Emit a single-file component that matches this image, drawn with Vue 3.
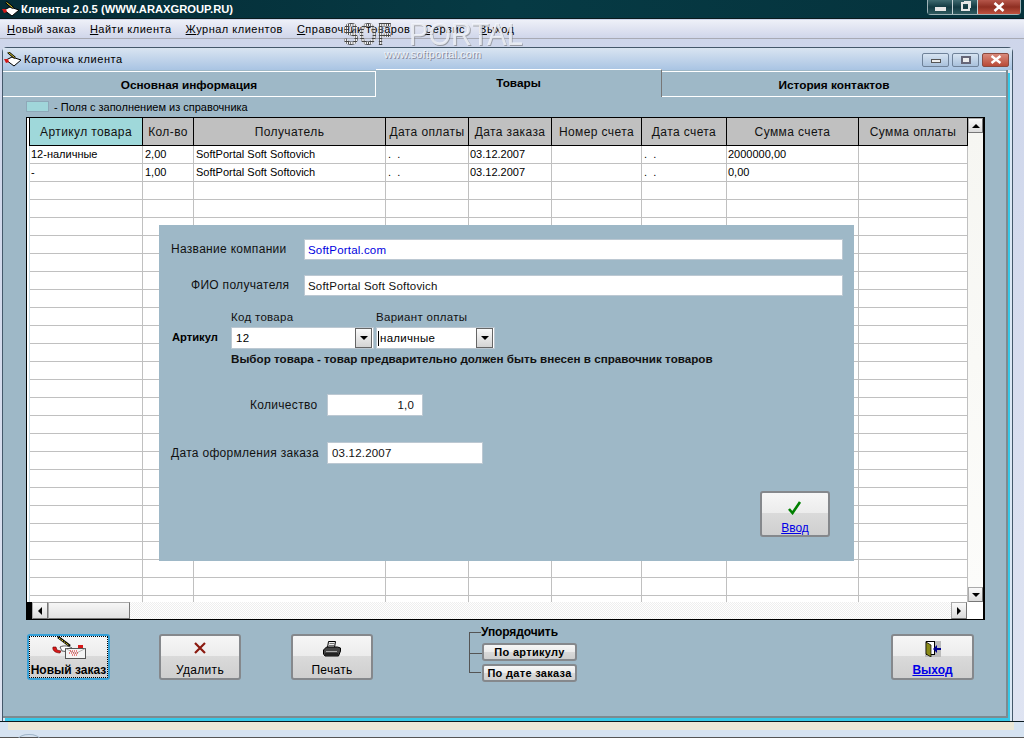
<script setup>
const menu = [
  ['Н', 'овый заказ'], ['Н', 'айти клиента'], ['Ж', 'урнал клиентов'],
  ['С', 'правочник товаров'], ['С', 'ервис'], ['В', 'ыход'],
]
const cols = [
  { t: 'Артикул товара', w: 113 }, { t: 'Кол-во', w: 51 }, { t: 'Получатель', w: 192 },
  { t: 'Дата оплаты', w: 83 }, { t: 'Дата заказа', w: 83 }, { t: 'Номер счета', w: 90 },
  { t: 'Дата счета', w: 85 }, { t: 'Сумма счета', w: 132 }, { t: 'Сумма оплаты', w: 109 },
]
const data = [
  ['12-наличные', '2,00', 'SoftPortal Soft Softovich', '.  .', '03.12.2007', '', '.  .', '2000000,00', ''],
  ['-', '1,00', 'SoftPortal Soft Softovich', '.  .', '03.12.2007', '', '.  .', '0,00', ''],
]
const rows = Array.from({ length: 26 }, (_, i) => data[i] || Array(9).fill(''))
</script>

<template>
  <div class="desk">
    <header class="titlebar">
      <svg class="appicon" width="18" height="16" viewBox="0 0 18 16">
        <path d="M2 9l6-3 9 3-7 6z" fill="#fff" stroke="#000" />
        <path d="M4 1l7 6" stroke="#000" stroke-width="2.4" />
        <path d="M4.5 1.5l6 5" stroke="#ecdc30" />
        <path d="M0 8l4 0 1 3-3 1z" fill="#d01818" />
      </svg>
      <span class="apptitle">Клиенты 2.0.5 (WWW.ARAXGROUP.RU)</span>
      <div class="winbtns">
        <span class="wb dark"><i class="glyph-min"></i></span>
        <span class="wb dark"><i class="glyph-rest"></i></span>
        <span class="wb redb wide">
          <svg width="12" height="10" viewBox="0 0 12 10"><path d="M1.5 1l9 8M10.5 1l-9 8" stroke="#fff" stroke-width="2.6" /></svg>
        </span>
      </div>
    </header>

    <nav class="menubar">
      <span v-for="(m, i) in menu" :key="i" class="menuitem"><u>{{ m[0] }}</u>{{ m[1] }}</span>
    </nav>

    <section class="child">
      <div class="childtitle">
        <svg width="18" height="15" viewBox="0 0 18 15">
          <path d="M2 8l6-3 9 3-7 6z" fill="#fff" stroke="#000" />
          <path d="M4 0l7 6" stroke="#000" stroke-width="2.4" />
          <path d="M4.5 .5l6 5" stroke="#ecdc30" />
          <path d="M0 7l4 0 1 3-3 1z" fill="#d01818" />
        </svg>
        <span class="childname">Карточка клиента</span>
        <div class="childbtns">
          <span class="cb"><i class="cb-min"></i></span>
          <span class="cb"><i class="cb-max"></i></span>
          <span class="cb cbred">
            <svg width="12" height="9" viewBox="0 0 12 9"><path d="M1.5 1l9 7M10.5 1l-9 7" stroke="#fff" stroke-width="2.4" /></svg>
          </span>
        </div>
      </div>

      <div class="panel">
        <div class="tabs">
          <div class="tab t1">Основная информация</div>
          <div class="tab t2">Товары</div>
          <div class="tab t3">История контактов</div>
        </div>
        <div class="legend"><span class="swatch"></span><span>- Поля с заполнением из справочника</span></div>

        <div class="grid">
          <div class="gridmain">
            <div class="thead">
              <div v-for="(c, i) in cols" :key="i" class="th" :class="{ teal: i === 0 }" :style="{ width: c.w + 'px' }">{{ c.t }}</div>
            </div>
            <div class="tbody">
              <div v-for="(r, ri) in rows" :key="ri" class="tr">
                <div v-for="(v, ci) in r" :key="ci" class="td" :style="{ width: cols[ci].w + 'px' }">{{ v }}</div>
              </div>
            </div>
          </div>
          <div class="vscroll">
            <span class="sbtn"><i class="arr up"></i></span>
            <span class="strack"></span>
            <span class="sbtn"><i class="arr down"></i></span>
          </div>
          <div class="hscroll">
            <span class="hblack"></span>
            <span class="sbtn"><i class="arr left"></i></span>
            <span class="hthumb"></span>
            <span class="htrack"></span>
            <span class="sbtn"><i class="arr right"></i></span>
            <span class="corner"></span>
          </div>

          <div class="dialog">
            <div class="frow r1">
              <label class="lab l1">Название компании</label>
              <div class="inp long blue">SoftPortal.com</div>
            </div>
            <div class="frow r2">
              <label class="lab l2">ФИО получателя</label>
              <div class="inp long">SoftPortal Soft Softovich</div>
            </div>
            <div class="art">
              <b class="artlab">Артикул</b>
              <div class="artcol c1">
                <span class="cap">Код товара</span>
                <div class="combo w1"><span class="val">12</span><span class="drop"><i class="arr down"></i></span></div>
              </div>
              <div class="artcol">
                <span class="cap">Вариант оплаты</span>
                <div class="combo w2"><span class="val caret">наличные</span><span class="drop"><i class="arr down"></i></span></div>
              </div>
            </div>
            <b class="hint">Выбор товара - товар предварительно должен быть внесен в справочник товаров</b>
            <div class="frow r3">
              <label class="lab l3">Количество</label>
              <div class="inp qty">1,0</div>
            </div>
            <div class="frow r4">
              <label class="lab l4">Дата оформления заказа</label>
              <div class="inp date">03.12.2007</div>
            </div>
            <div class="okrow">
              <button class="btn ok">
                <svg width="16" height="14" viewBox="0 0 16 14"><path d="M2 8l3.5 4L13 1" fill="none" stroke="#008000" stroke-width="2.6" /></svg>
                <span class="link">Ввод</span>
              </button>
            </div>
          </div>
        </div>

        <footer class="actions">
          <button class="btn act focus">
            <svg class="ic" width="34" height="24" viewBox="0 0 34 24">
              <path d="M6 1l12 9" stroke="#000" stroke-width="2.6" />
              <path d="M7 2l10 7.500" stroke="#ecdc30" stroke-dasharray="2 1" />
              <path d="M8 11c4-2 9-1 12 1l-2 4-8-1z" fill="#fff" stroke="#333" stroke-width=".8" />
              <path d="M1 11c-1 3 2 6 7 6l1-2-4-1-1-3z" fill="#d81818" stroke="#600" stroke-width=".6" />
              <rect x="13.500" y="12.500" width="20" height="10" fill="#f4f4f4" stroke="#555" />
              <path d="M13.500 12.500l10 5 10-5" fill="none" stroke="#999" stroke-width=".7" />
              <path d="M18 15h8M17 17h10M20 19h6" stroke="#e01010" stroke-dasharray="1 1" />
              <path d="M26 9h5v3h-5z" fill="#d81818" />
            </svg>
            <b class="focuslabel">Новый заказ</b>
          </button>
          <button class="btn act">
            <svg class="ic" width="14" height="14" viewBox="0 0 14 14"><path d="M2 2l10 10M12 2L2 12" stroke="#8b1a10" stroke-width="2.2" /></svg>
            <span>Удалить</span>
          </button>
          <button class="btn act">
            <svg class="ic" width="18" height="16" viewBox="0 0 18 16">
              <path d="M5.500 .5h7l-1 6h-7z" fill="#eee" stroke="#000" />
              <path d="M6.500 2.500h5M6 4.500h5" stroke="#777" />
              <path d="M.5 9l3-3h11l3 1v3l-2 5H2l-1.500-2z" fill="#444" stroke="#000" />
              <path d="M3 10h11v1H3z" fill="#aaa" />
              <path d="M2 12h13v2H2z" fill="#222" />
            </svg>
            <span>Печать</span>
          </button>
          <div class="sorter">
            <span class="tree"></span>
            <span class="sorttitle">Упорядочить</span>
            <button class="btn sb">По артикулу</button>
            <button class="btn sb">По дате заказа</button>
          </div>
          <button class="btn act exit">
            <svg class="ic" width="16" height="16" viewBox="0 0 16 16">
              <rect width="16" height="16" fill="#bbb" />
              <rect x="1.500" y=".5" width="8" height="13" fill="#fff" stroke="#000" />
              <path d="M1 1l5 3v12l-5-3z" fill="#8a8a18" stroke="#000" stroke-width=".7" />
              <path d="M12 7h4v2h-4zM8 8l4-4v8z" fill="#000090" />
            </svg>
            <span class="link strong">Выход</span>
          </button>
        </footer>
      </div>
    </section>

    <div class="bottomstrip"><span class="beige"></span><span class="dome"></span></div>

    <div class="wm">
      <div class="wmtop"><span class="wmsoft">SOFT</span><span class="wmportal">PORTAL</span></div>
      <div class="wmurl">www.softportal.com</div>
    </div>
  </div>
</template>

<style>
html, body { margin: 0; padding: 0; overflow: hidden; background: #d6e3f1; }
</style>

<style scoped>
* { box-sizing: border-box; }
.desk { position: relative; width: 1024px; height: 738px; overflow: hidden; font-family: "Liberation Sans", Arial, sans-serif; font-size: 11px; color: #000; background: linear-gradient(#cdd5ea, #dfe4f2); }

.titlebar { height: 19px; display: flex; align-items: center; padding-left: 2px; background: linear-gradient(90deg, #052c36, #063a44 50%, #05323c); color: #fff; border-bottom: 1px solid #0a1a1e; }
.appicon { flex: none; }
.apptitle { margin-left: 1px; font-size: 11.2px; font-weight: 700; margin-top: -1px; }
.winbtns { margin-left: auto; margin-right: 3px; margin-top: -4px; display: flex; border: 1px solid #9fb3b8; border-top: 0; border-radius: 0 0 4px 4px; height: 15px; }
.wb { width: 25px; display: flex; align-items: center; justify-content: center; border-right: 1px solid #c5d2d5; background: linear-gradient(#3f6a70, #133a42 50%, #2f5a60); }
.wide { width: 42px; border-right: 0; }
.redb { background: linear-gradient(#b5564a, #8f2f22 50%, #c0523f); }
.glyph-min { display: block; width: 11px; height: 4px; background: #e6e6e6; margin-top: 4px; }
.glyph-rest { display: block; width: 9px; height: 9px; border: 2px solid #e6e6e6; box-shadow: 2px -2px 0 -1px #e6e6e6; }

.menubar { height: 19px; margin-top: 1px; display: flex; align-items: center; padding-left: 7px; gap: 14px; background: linear-gradient(#eef0f8, #d0d6ea); border-bottom: 1px solid #a8aab4; letter-spacing: .5px; font-size: 11px; }
.menuitem { white-space: nowrap; }
.menuitem:nth-child(1) { letter-spacing: .42px; }

.child { position: absolute; left: 2px; top: 47px; width: 1011px; height: 674px; border: 1px solid #44586a; border-bottom: 0; border-radius: 5px 5px 0 0; background: #dbe8f5; display: flex; flex-direction: column; }
.childtitle { height: 22px; display: flex; align-items: center; padding-left: 1px; flex: none; background: linear-gradient(#d9e4f1, #a9c4e3); }
.childname { margin-left: 2px; font-size: 11px; letter-spacing: .55px; }
.childbtns { margin-left: auto; margin-right: 3px; display: flex; gap: 3px; margin-top: 1px; }
.cb { width: 27px; height: 14px; border: 1px solid #6f8299; border-radius: 2px; display: flex; align-items: center; justify-content: center; background: linear-gradient(#d7e4f2, #a9c1dc); }
.cb-min { display: block; width: 10px; height: 4px; margin-top: 3px; background: #eee; border: 1px solid #555; }
.cb-max { display: block; width: 10px; height: 8px; border: 2px solid #667; background: #eee; }
.cbred { background: linear-gradient(#d98a7c, #b94a38); border-color: #8a4a40; }

.panel { position: relative; flex: none; height: 648px; width: 1005px; background: #9eb8c7; border-right: 2px solid #7d8a90; border-bottom: 2px solid #7d8a90; box-shadow: 2px 3px 0 #35c8e8; }

.tabs { height: 27px; position: relative; display: flex; }
.tab { display: flex; align-items: center; justify-content: center; font-weight: 700; font-size: 11.8px; }
.t1 { width: 373px; margin-top: 1px; border: 1px solid #fff; border-left: 0; padding-top: 1px; }
.t2 { width: 286px; margin-top: -1px; height: 28px; background: #9eb8c7; border-top: 1px solid #fff; border-right: 1px solid #777; padding-bottom: 1px; }
.t3 { width: 344px; margin-top: 1px; border-top: 1px solid #fff; border-bottom: 1px solid #fff; padding-top: 1px; }

.legend { height: 20px; margin-top: -1px; padding-top: 1px; display: flex; align-items: center; padding-left: 23px; gap: 5px; font-size: 11px; }
.swatch { width: 23px; height: 11px; background: #a0d6da; border: 1px solid #8ea8b8; }

.grid { position: relative; width: 959px; height: 503px; margin-left: 23px; margin-top: 1px; background: #fff; border: 1px solid #000; border-right-width: 2px; display: grid; grid-template-columns: 1fr 15px; grid-template-rows: 484px 17px; }
.gridmain { overflow: hidden; border-left: 2px solid #fff; }
.thead { display: flex; height: 28px; border-left: 1px solid #000; }
.th { height: 28px; flex: none; background: #c0c0c0; border-right: 1px solid #000; border-bottom: 1px solid #000; display: flex; align-items: center; justify-content: center; font-size: 12px; letter-spacing: .4px; white-space: nowrap; color: #111; }
.teal { background: #9fd8da; }
.tbody { border-left: 1px solid #c8dfe8; }
.tr { display: flex; height: 18px; }
.td { flex: none; height: 18px; border-right: 1px solid #c0c0c0; border-bottom: 1px solid #c0c0c0; padding: 2px 0 0 2px; white-space: pre; font-size: 11px; overflow: hidden; }
.td:first-child { padding-left: 1px; }
.td:nth-child(n+4) { padding-left: 1px; }
.td:nth-child(4), .td:nth-child(7) { padding-left: 2px; }

.vscroll { display: flex; flex-direction: column; background: #f4f4f0; grid-column: 2; grid-row: 1; }
.sbtn { flex: none; width: 15px; height: 15px; display: flex; align-items: center; justify-content: center; background: linear-gradient(#fafafa, #dcdcdc); border: 1px solid #aaa; border-right-color: #777; border-bottom-color: #777; }
.strack { flex: 1; background: linear-gradient(#f6f6f2, #fcfcfa); }
.arr { display: block; width: 0; height: 0; border: 4px solid transparent; }
.arr.up { border-bottom-color: #000; margin-top: -4px; }
.arr.down { border-top-color: #000; margin-top: 4px; }
.arr.left { border-right-color: #000; margin-left: -4px; }
.arr.right { border-left-color: #000; margin-left: 4px; }

.hscroll { grid-column: 1 / 3; grid-row: 2; display: flex; background: #f5f5f1; align-items: stretch; }
.hblack { flex: none; width: 5px; background: #000; }
.hscroll .sbtn { height: 17px; width: 16px; }
.hthumb { flex: none; width: 82px; background: linear-gradient(#f6f6f6, #e2e2e2); border: 1px solid #aaa; border-right-color: #777; border-bottom-color: #777; }
.htrack { flex: 1; background-image: repeating-conic-gradient(#fff 0 25%, #eee 0 50%); background-size: 2px 2px; }
.corner { flex: none; width: 16px; background: #fff; }

.dialog { position: absolute; left: 132px; top: 107px; width: 695px; height: 336px; background: #9eb8c7; }
.frow { position: absolute; left: 0; display: flex; align-items: center; }
.r1 { top: 14px; }
.r2 { top: 50px; }
.r3 { top: 169px; }
.r4 { top: 217px; }
.lab { position: absolute; text-align: right; font-size: 12px; letter-spacing: .3px; white-space: nowrap; color: #111; }
.l1 { left: 12px; top: 3px; }
.l2 { left: 32px; top: 3px; }
.l3 { left: 91px; top: 4px; }
.l4 { left: 12px; top: 4px; }
.inp { position: relative; background: #fff; border: 1px solid #bcc8d2; display: flex; align-items: center; padding-left: 3px; font-size: 11.5px; letter-spacing: .2px; color: #111; white-space: nowrap; }
.long { left: 145px; width: 539px; height: 21px; }
.blue { color: #0000e0; }
.qty { left: 168px; width: 96px; height: 22px; justify-content: flex-end; padding-right: 8px; }
.date { left: 168px; width: 156px; height: 22px; padding-left: 4px; }
.art { position: absolute; top: 86px; left: 0; display: flex; }
.artlab { position: absolute; left: 13px; top: 20px; font-size: 11.2px; }
.c1 { margin-left: 72px; }
.artcol { display: flex; flex-direction: column; }
.cap { font-size: 11.5px; letter-spacing: .3px; height: 16px; white-space: nowrap; color: #111; }
.combo { height: 22px; background: #fff; display: flex; align-items: center; justify-content: space-between; border: 1px solid #bcc8d2; }
.w1 { width: 143px; margin-right: 2px; }
.w2 { width: 119px; }
.val { padding-left: 4px; font-size: 11.5px; letter-spacing: .3px; }
.w2 .val { padding-left: 1px; border-left: 1px solid #000; margin-left: 1px; line-height: 15px; }
.drop { width: 17px; height: 20px; margin-right: 1px; display: flex; align-items: center; justify-content: center; background: linear-gradient(#fafafa, #d4d4d4); border: 1px solid #666; }
.hint { position: absolute; left: 72px; top: 127px; font-size: 11.65px; white-space: nowrap; color: #111; }
.okrow { position: absolute; left: 601px; top: 266px; }

.btn { display: flex; flex-direction: column; align-items: center; font-family: inherit; color: #000; padding: 0; border: 2px solid #85888c; border-radius: 3px; background: linear-gradient(#f6f6f6 0, #ececec 47%, #dadada 48%, #cfcfcf 100%); }
.ok { width: 70px; height: 46px; padding-top: 8px; gap: 6px; font-size: 12px; }
.link { color: #0000e6; text-decoration: underline; }
.strong { font-weight: 700; letter-spacing: 0; }

.actions { position: absolute; left: 0; right: 0; top: 564px; height: 60px; }
.act { position: absolute; top: 0; width: 82px; height: 46px; font-size: 12px; letter-spacing: .3px; justify-content: space-between; padding: 5px 0 1px; }
.act:nth-child(1) { left: 24px; width: 83px; border-color: #35a0d8; }
.act:nth-child(2) { left: 156px; }
.act:nth-child(3) { left: 288px; }
.exit { left: 888px; width: 83px; }
.focus { position: absolute; outline: 1px dotted #000; outline-offset: -3px; padding: 0 0 1px; }
.focuslabel { font-size: 12px; letter-spacing: 0; white-space: nowrap; }
.ic { flex: none; }

.sorter { position: absolute; left: 466px; top: -9px; width: 112px; height: 58px; }
.tree { position: absolute; left: 0; top: 7px; width: 12px; height: 41px; border: solid #555; border-width: 1px 0 1px 1px; }
.tree::after { content: ""; position: absolute; left: 0; top: 20px; width: 12px; border-top: 1px solid #555; }
.sorttitle { position: absolute; left: 12px; top: 0; font-size: 12px; white-space: nowrap; font-weight: 700; letter-spacing: -.1px; }
.sb { position: absolute; left: 13px; width: 95px; height: 18px; font-size: 11px; font-weight: 700; letter-spacing: .3px; justify-content: center; white-space: nowrap; }
.sb:nth-of-type(1) { top: 18px; }
.sb:nth-of-type(2) { top: 39px; }

.bottomstrip { position: absolute; left: 0; right: 0; top: 721px; height: 17px; background: #d6e3f1; border-top: 1px solid #0a1a20; border-bottom: 1px solid #555; }
.beige { display: block; margin-left: 8px; width: 1006px; height: 8px; background: #ebe8d8; }
.dome { position: absolute; left: 18px; top: 12px; width: 22px; height: 10px; border: 1px solid #9fb4c8; border-radius: 50%; }

.wm { position: absolute; left: 343px; top: 22px; width: 190px; pointer-events: none; }
.wmtop { display: flex; align-items: center; height: 24px; font-family: "Liberation Sans", sans-serif; font-size: 32px; line-height: 24px; white-space: nowrap; }
.wmsoft { flex: none; width: 66px; display: inline-block; transform: scaleX(.74); transform-origin: left center; font-weight: 700; color: transparent; background-image: radial-gradient(circle, #444 0 1px, #f0f0f0 1.2px); background-size: 3px 3px; -webkit-background-clip: text; background-clip: text; }
.wmportal { flex: none; color: rgba(242, 244, 250, .85); text-shadow: 1px 1px 0 rgba(110, 110, 110, .55); display: inline-block; transform: scaleX(.91); transform-origin: left center; }
.wmurl { margin-left: 41px; margin-top: 2px; font-size: 11px; letter-spacing: .1px; color: #eef2f8; text-shadow: 1px 1px 0 #889; }
</style>
